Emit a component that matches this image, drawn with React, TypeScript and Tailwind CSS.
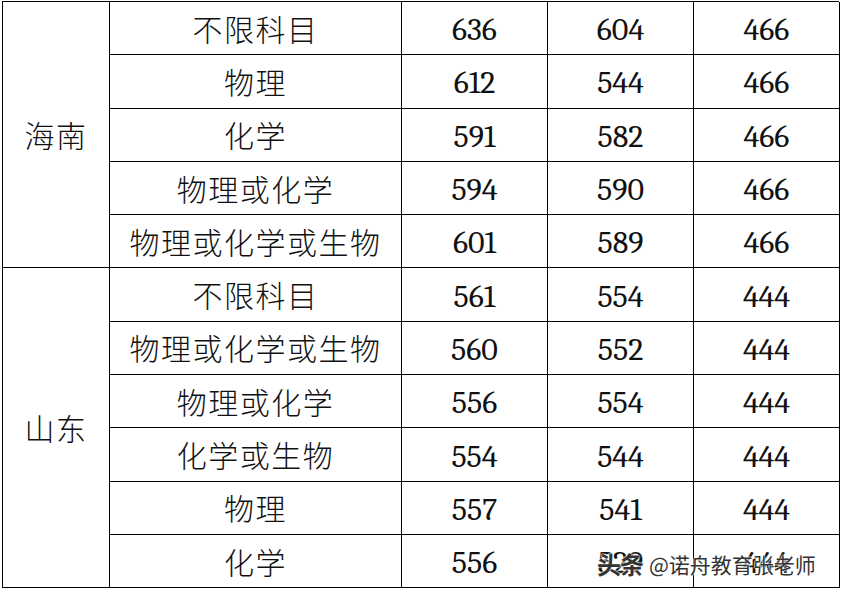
const hainan = [
  ['不限科目', '636', '604', '466'],
  ['物理', '612', '544', '466'],
  ['化学', '591', '582', '466'],
  ['物理或化学', '594', '590', '466'],
  ['物理或化学或生物', '601', '589', '466'],
];

const shandong = [
  ['不限科目', '561', '554', '444'],
  ['物理或化学或生物', '560', '552', '444'],
  ['物理或化学', '556', '554', '444'],
  ['化学或生物', '554', '544', '444'],
  ['物理', '557', '541', '444'],
  ['化学', '556', '529', '444'],
];

const cjk = 'font-[family-name:Noto_Sans_CJK_SC] font-light text-[30px] tracking-[1.5px] text-[#111]';
const num = 'font-serif font-light text-[32px] leading-none pt-[4px] text-[#111]';
const cell = 'flex items-center justify-center border-r border-b border-black';

function Group({ name, rows }: { name: string; rows: string[][] }) {
  return (
    <>
      <div
        className={`${cell} ${cjk}`}
        style={{ gridRow: `span ${rows.length} / span ${rows.length}` }}
      >
        {name}
      </div>
      {rows.map((r, i) => (
        <div key={i} className="contents">
          <div className={`${cell} ${cjk}`}>{r[0]}</div>
          <div className={`${cell} ${num}`}>{r[1]}</div>
          <div className={`${cell} ${num}`}>{r[2]}</div>
          <div className={`${cell} ${num}`}>{r[3]}</div>
        </div>
      ))}
    </>
  );
}

export default function App() {
  return (
    <div className="relative w-[841px] h-[592px] bg-white overflow-hidden">
      <div className="ml-[2px] mt-[1px] grid w-[837px] grid-cols-[107px_292px_146px_146px_146px] grid-rows-[repeat(11,53.3px)] border-t border-l border-black">
        <Group name="海南" rows={hainan} />
        <Group name="山东" rows={shandong} />
      </div>
      <div className="absolute left-[597px] top-[549px] flex items-center font-[family-name:Noto_Sans_CJK_SC] text-[21px] leading-[30px] text-[#333] [text-shadow:0_0_2px_#fff,0_0_2px_#fff,0_0_1px_#fff] whitespace-nowrap">
        <span className="mr-[6px] text-[24px] font-bold tracking-[-1px]">头条</span>
        <span>@诺舟教育张老师</span>
      </div>
    </div>
  );
}
